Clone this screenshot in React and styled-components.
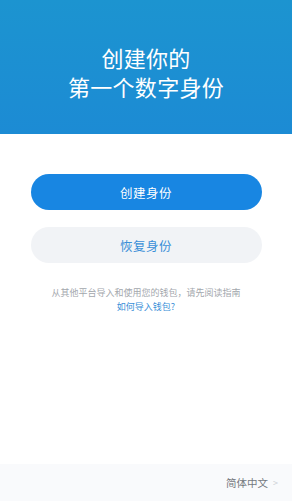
import React from 'react';
import styled, { createGlobalStyle } from 'styled-components';

const GlobalStyle = createGlobalStyle`
  html, body {
    margin: 0;
    padding: 0;
    background: #ffffff;
  }
  body {
    font-family: "Noto Sans CJK SC", "Noto Sans", sans-serif;
  }
`;

const Page = styled.div`
  width: 292px;
  height: 501px;
  display: flex;
  flex-direction: column;
  background: #ffffff;
`;

const Header = styled.header`
  height: 134px;
  background: linear-gradient(180deg, #1c94d0 0%, #1c8bd4 100%);
  display: flex;
  flex-direction: column;
  align-items: center;
  justify-content: center;
  padding-top: 9px;
  box-sizing: border-box;
  h1 {
    margin: 0;
    color: #ffffff;
    font-weight: 400;
    font-size: 22px;
    line-height: 29px;
    text-align: center;
    letter-spacing: 0.3px;
  }
`;

const Body = styled.main`
  flex: 1;
  display: flex;
  flex-direction: column;
  align-items: center;
  padding-top: 40px;
`;

const ActionButton = styled.button`
  width: 231px;
  height: 36px;
  border: none;
  border-radius: 18px;
  background: ${(p) => (p.$primary ? '#1886e2' : '#f1f3f6')};
  color: ${(p) => (p.$primary ? '#ffffff' : '#3a8fd8')};
  font-family: inherit;
  font-size: 12.5px;
  letter-spacing: 0.5px;
  margin-bottom: ${(p) => (p.$primary ? '17px' : '0')};
`;

const Guide = styled.div`
  margin-top: 23px;
  text-align: center;
  font-size: 9px;
  line-height: 14px;
  color: #a3a7ad;
  a {
    display: block;
    color: #3a8fd8;
    text-decoration: none;
  }
`;

const Footer = styled.footer`
  height: 37px;
  background: #f9fafc;
  display: flex;
  align-items: center;
  justify-content: flex-end;
  padding: 0 14px 0 0;
  font-size: 10.5px;
  color: #74787e;
  gap: 5px;
`;

const Chevron = styled.span`
  color: #ccd0d5;
  font-size: 9px;
`;

export default function App() {
  return (
    <>
      <GlobalStyle />
      <Page>
        <Header>
          <h1>创建你的</h1>
          <h1>第一个数字身份</h1>
        </Header>
        <Body>
          <ActionButton $primary>创建身份</ActionButton>
          <ActionButton>恢复身份</ActionButton>
          <Guide>
            从其他平台导入和使用您的钱包，请先阅读指南
            <a href="#">如何导入钱包?</a>
          </Guide>
        </Body>
        <Footer>
          简体中文
          <Chevron>&gt;</Chevron>
        </Footer>
      </Page>
    </>
  );
}
